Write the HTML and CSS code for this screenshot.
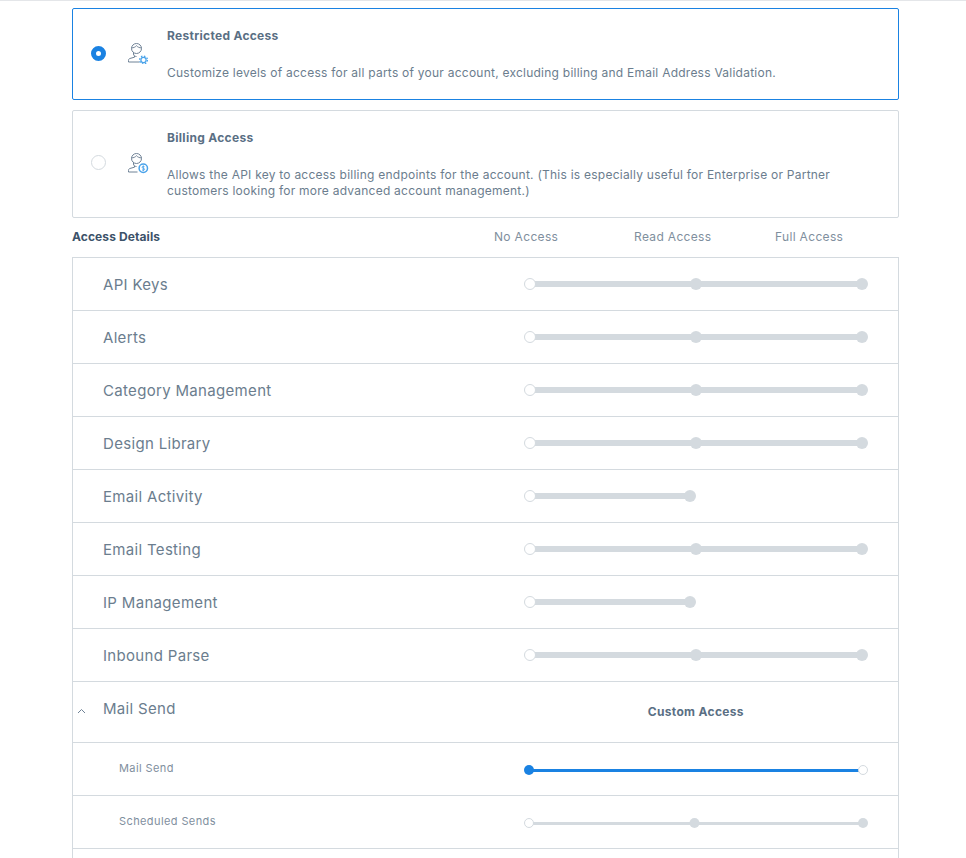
FILE: index.html
```html
<!DOCTYPE html>
<html lang="en">
<head>
<meta charset="utf-8">
<title>Restricted Access</title>
<link rel="stylesheet" href="styles.css">
</head>
<body>
<main class="page">
  <section class="card card-active">
    <span class="radio radio-on"></span>
    <svg class="persona" viewBox="0 0 24 24" width="24" height="24" fill="none" stroke="#6f8296" stroke-width="1">
      <circle cx="10.500" cy="8.500" r="5"/><path d="M5.500 8c2.200-.2 3.900-1 5-2.300 1.100 1.300 2.800 2.100 5 2.300M7.500 12.500v1.500c0 1.500 1.300 2.500 3 2.500M8.500 16v1.200l-4.700 1.300c-1 .4-1.300 1-1.300 2v1.500h11"/>
      <circle cx="17.500" cy="20" r="2.600" stroke="#4aa3ea" stroke-width="1.200"/><circle cx="17.500" cy="20" r="3.900" stroke="#4aa3ea" stroke-width="1.300" stroke-dasharray="1.500 1.560"/>
    </svg>
    <div class="card-copy">
      <h2 class="card-title">Restricted Access</h2>
      <p class="card-text">Customize levels of access for all parts of your account, excluding billing and Email Address Validation.</p>
    </div>
  </section>
  <section class="card card-billing">
    <span class="radio"></span>
    <svg class="persona" viewBox="0 0 24 24" width="24" height="24" fill="none" stroke="#6f8296" stroke-width="1">
      <circle cx="10.500" cy="8.500" r="5"/><path d="M5.500 8c2.200-.2 3.900-1 5-2.300 1.100 1.300 2.800 2.100 5 2.300M7.500 12.500v1.500c0 1.500 1.300 2.500 3 2.500M8.500 16v1.200l-4.700 1.300c-1 .4-1.300 1-1.300 2v1.500h9"/>
      <circle cx="17.300" cy="18.300" r="4.200" fill="#fff" stroke="#4aa3ea" stroke-width="1.500"/><path d="M17.300 15.500v5.600M18.500 16.700c-.7-.6-2.400-.5-2.400.6 0 1.200 2.500.7 2.500 1.900 0 1.100-1.800 1.200-2.600.6" stroke="#4aa3ea" stroke-width=".9"/>
    </svg>
    <div class="card-copy">
      <h2 class="card-title">Billing Access</h2>
      <p class="card-text">Allows the API key to access billing endpoints for the account. (This is especially useful for Enterprise or Partner customers looking for more advanced account management.)</p>
    </div>
  </section>
  <header class="details-head">
    <h3 class="details-title">Access Details</h3>
    <span class="col-label col-no">No Access</span>
    <span class="col-label col-read">Read Access</span>
    <span class="col-label col-full">Full Access</span>
  </header>
  <div class="table">
    <div class="row"><span class="row-name">API Keys</span><div class="slider"><i class="knob knob-off"></i><i class="knob"></i><i class="knob"></i></div></div>
    <div class="row"><span class="row-name">Alerts</span><div class="slider"><i class="knob knob-off"></i><i class="knob"></i><i class="knob"></i></div></div>
    <div class="row"><span class="row-name">Category Management</span><div class="slider"><i class="knob knob-off"></i><i class="knob"></i><i class="knob"></i></div></div>
    <div class="row"><span class="row-name">Design Library</span><div class="slider"><i class="knob knob-off"></i><i class="knob"></i><i class="knob"></i></div></div>
    <div class="row"><span class="row-name">Email Activity</span><div class="slider slider-short"><i class="knob knob-off"></i><i class="knob"></i></div></div>
    <div class="row"><span class="row-name">Email Testing</span><div class="slider"><i class="knob knob-off"></i><i class="knob"></i><i class="knob"></i></div></div>
    <div class="row"><span class="row-name">IP Management</span><div class="slider slider-short"><i class="knob knob-off"></i><i class="knob"></i></div></div>
    <div class="row"><span class="row-name">Inbound Parse</span><div class="slider"><i class="knob knob-off"></i><i class="knob"></i><i class="knob"></i></div></div>
    <div class="row row-parent">
      <svg class="chevron" viewBox="0 0 9 6" width="9" height="6" fill="none" stroke="#6f8296" stroke-width="1"><path d="M1 5l3.500-3.500L8 5"/></svg>
      <span class="row-name">Mail Send</span>
      <span class="custom">Custom Access</span>
    </div>
    <div class="row row-sub"><span class="sub-name">Mail Send</span><div class="slider slider-sub slider-blue"><i class="knob knob-blue"></i><i class="knob knob-off"></i></div></div>
    <div class="row row-sub"><span class="sub-name">Scheduled Sends</span><div class="slider slider-sub"><i class="knob knob-off"></i><i class="knob knob-mid"></i><i class="knob"></i></div></div>
    <div class="row row-rest"></div>
  </div>
</main>
</body>
</html>
```

FILE: styles.css
```css
* { box-sizing: border-box; }
html, body { margin: 0; height: 858px; overflow: hidden; background: #fff; }
body { font-family: Inter, "Liberation Sans", sans-serif; color: #6b7d8e; }
.page { margin: 0 67px 0 72px; padding-top: 8px; position: relative; }
.page::before { content: ""; display: block; position: absolute; top: 0; left: -72px; width: 966px; height: 1px; background: #e4e6e9; }
.card { display: flex; align-items: flex-start; width: 827px; border: 1px solid #d4dadf; border-radius: 2px; padding: 18px 60px 0 18px; }
.card-active { height: 92px; border-color: #1a82e2; }
.card-billing { height: 108px; margin-top: 10px; }
.radio { flex: none; width: 15px; height: 15px; margin-top: 19px; border: 1px solid #d4dadf; border-radius: 50%; background: #fff; }
.radio-on { border: 5px solid #1a82e2; }
.persona { flex: none; margin: 13px 0 0 20px; }
.card-billing .persona { margin-top: 21px; }
.card-billing .radio { margin-top: 26px; }
.card-copy { margin-left: 17px; }
.card-title { margin: 0; font-size: 12px; line-height: 18px; font-weight: 700; letter-spacing: .3px; color: #5a6f84; }
.card-text { margin: 20px 0 0; font-size: 12px; line-height: 16px; letter-spacing: .24px; color: #6b7d8e; }
.details-head { display: grid; grid-template-columns: 422px 140px 141px 80px; align-items: center; height: 38px; padding-bottom: 1px; }
.details-title { margin: 0; font-size: 12px; font-weight: 700; letter-spacing: .1px; color: #3c5269; }
.col-label { font-size: 12px; letter-spacing: .33px; color: #7f8f9e; }
.table { width: 827px; margin-top: 1px; border: 1px solid #d4dadf; border-bottom: 0; }
.row { position: relative; display: flex; align-items: center; justify-content: space-between; height: 53px; padding: 0 30px; border-bottom: 1px solid #d4dadf; }
.row-name { font-size: 15px; font-weight: 400; letter-spacing: .32px; color: #6b7d8e; }
.row-parent { height: 61px; justify-content: flex-start; align-items: flex-start; padding-top: 17px; }
.chevron { position: absolute; left: 4px; top: 26px; }
.custom { margin-left: 472px; margin-top: 5px; font-size: 12px; font-weight: 700; letter-spacing: .32px; white-space: nowrap; color: #5a6f84; }
.sub-name { margin-left: 16px; font-size: 11px; letter-spacing: .4px; color: #7f8f9e; }
.row-sub { padding-bottom: 2px; }
.row-rest { border-bottom: 0; }
.slider { position: relative; display: flex; justify-content: space-between; align-items: center; width: 344px; height: 12px; margin-top: -1px; }
.slider::before { content: ""; position: absolute; left: 6px; right: 6px; top: 3px; height: 6px; background: #d4dadf; }
.slider-short { width: 172px; margin-right: 172px; }
.knob { position: relative; display: block; width: 12px; height: 12px; border-radius: 50%; background: #d4dadf; }
.knob-off { background: #fff; border: 1px solid #d4dadf; }
.slider-sub { height: 10px; margin-top: 4px; }
.slider-sub::before { top: 3.500px; height: 3px; left: 5px; right: 5px; }
.slider-sub .knob { width: 10px; height: 10px; }
.slider-sub .knob-mid { transform: translateX(-1.500px); }
.slider-blue::before { background: #1a82e2; }
.slider-sub .knob-blue { background: #1a82e2; }
```
